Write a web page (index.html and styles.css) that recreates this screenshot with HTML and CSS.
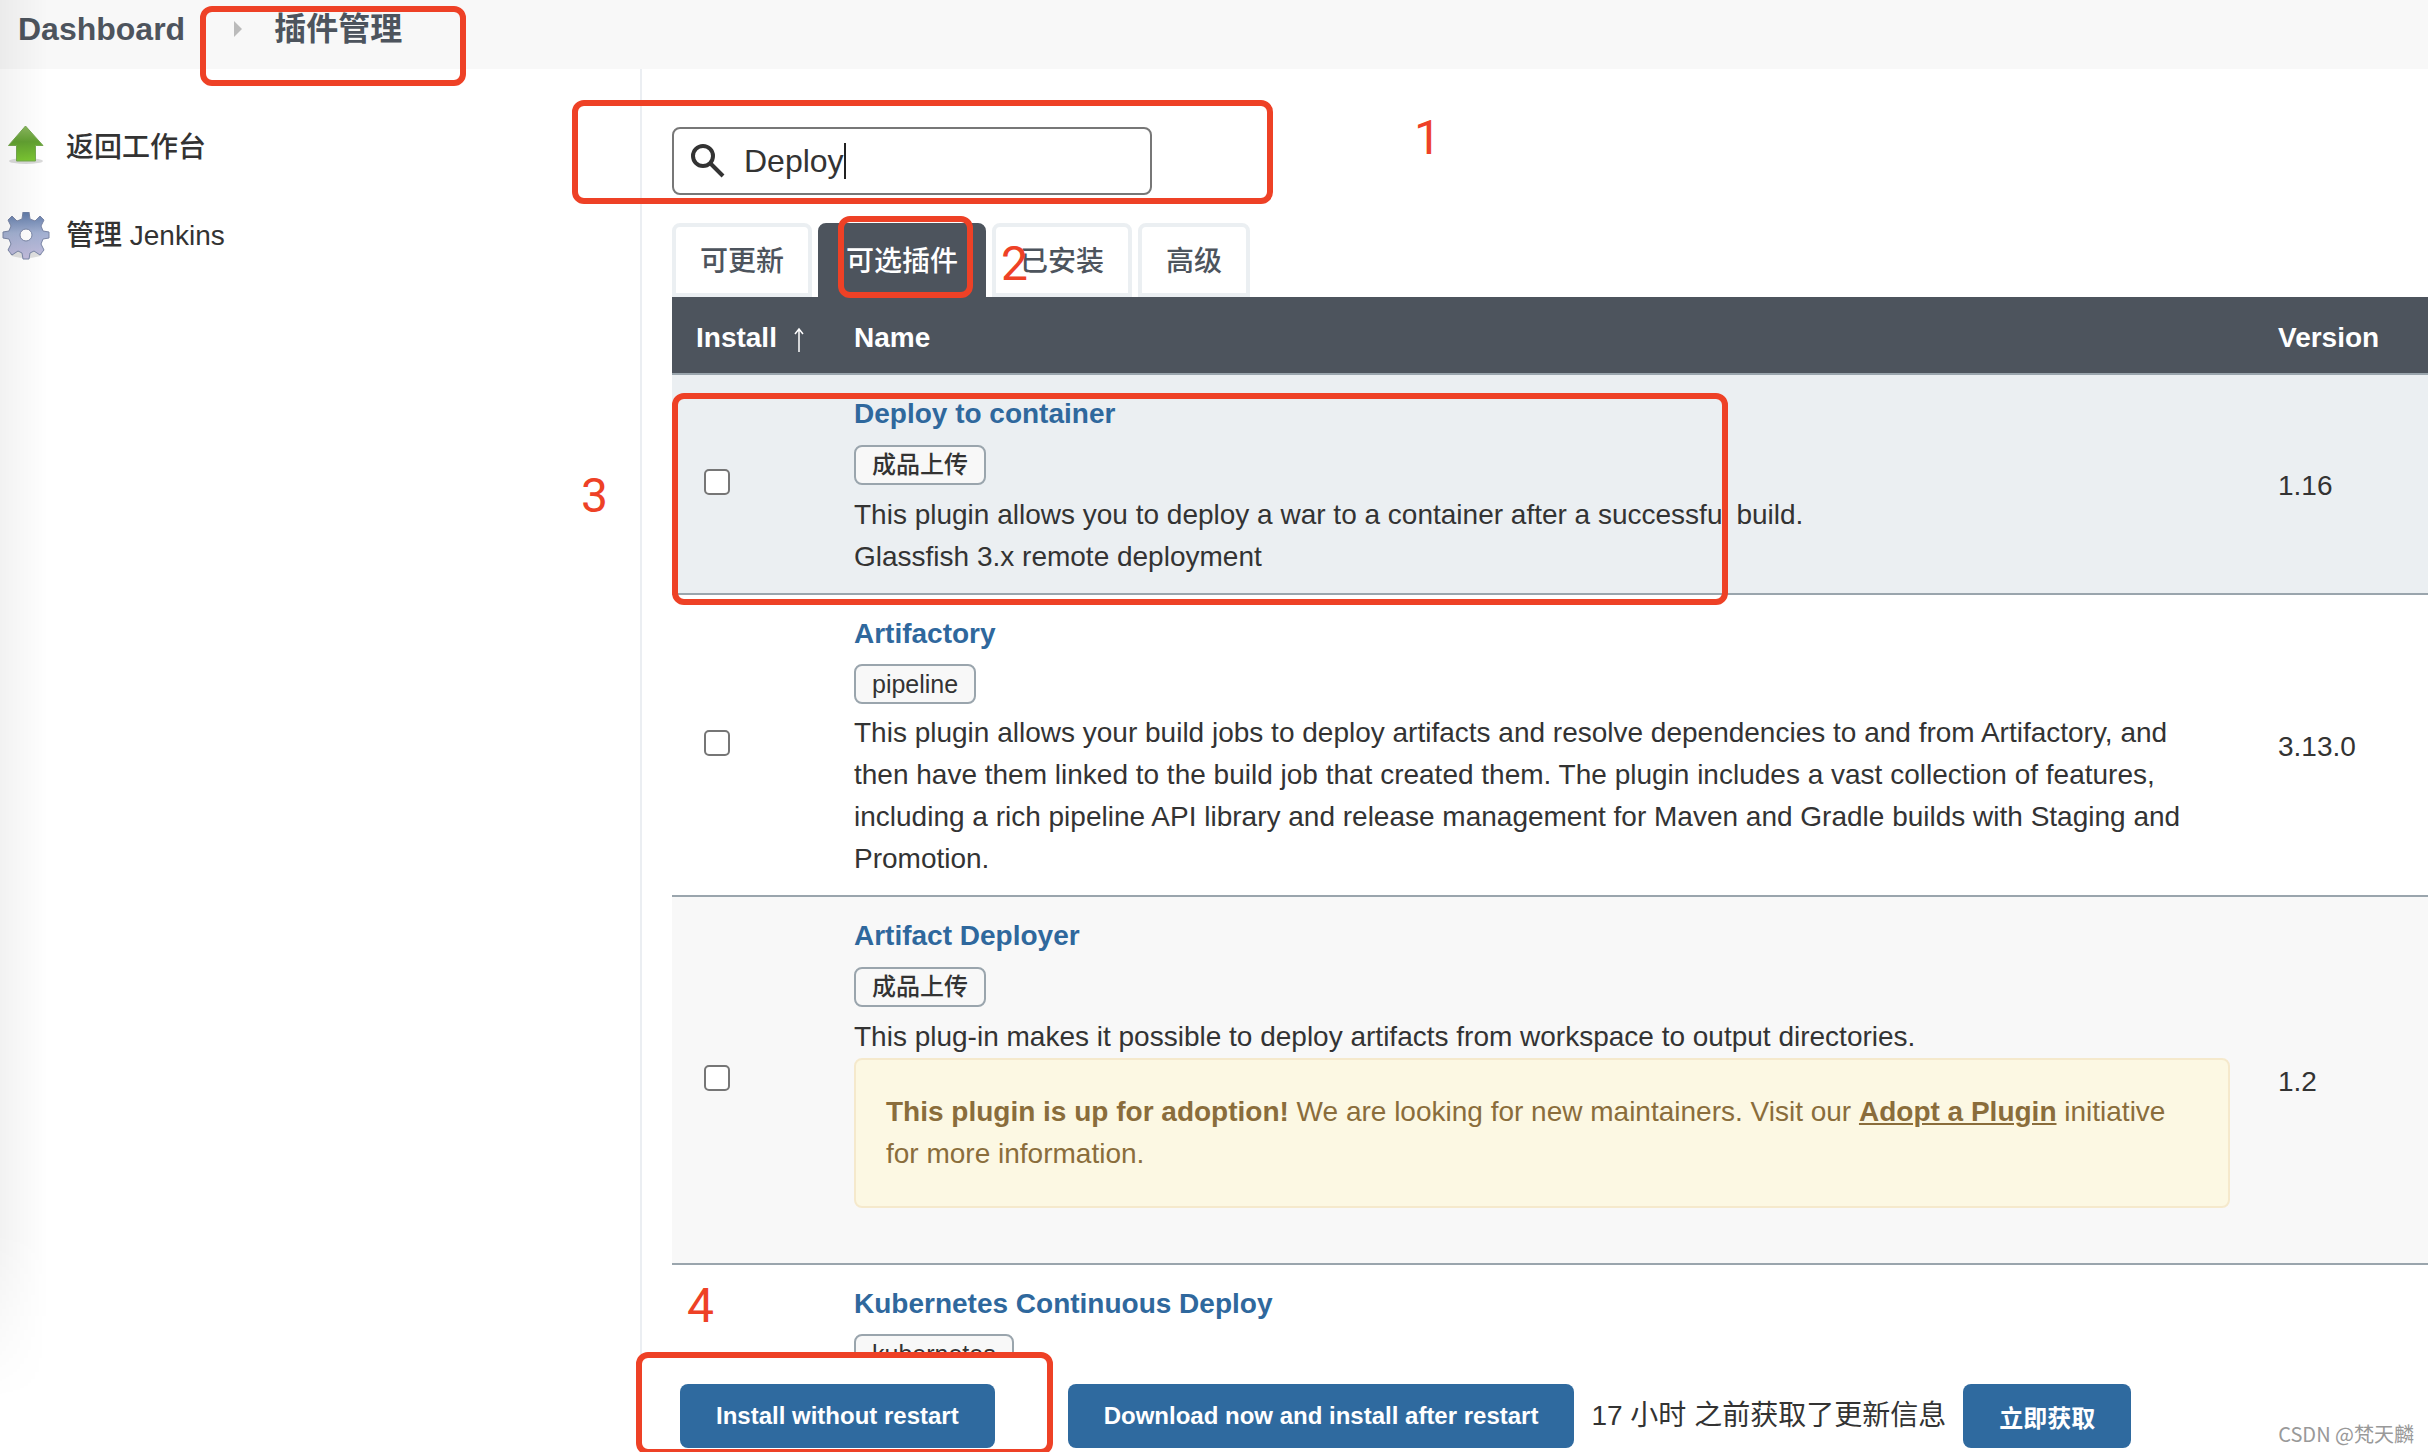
FILE: index.html
```html
<!DOCTYPE html>
<html lang="zh-CN">
<head>
<meta charset="utf-8">
<title>插件管理 [Jenkins]</title>
<link rel="stylesheet" href="styles.css">
</head>
<body>
<div class="page">
  <nav class="breadcrumbs">
    <a href="#" class="crumb">Dashboard</a>
    <span class="crumb-arrow"></span>
    <a href="#" class="crumb">插件管理</a>
  </nav>

  <div class="layout">
    <aside class="side">
      <a href="#" class="task">
        <svg class="task-icon" viewBox="0 0 48 48" aria-hidden="true">
          <defs>
            <linearGradient id="leaf" x1="0" y1="0" x2="0" y2="1"><stop offset="0" stop-color="#8cb860"/><stop offset=".45" stop-color="#62a032"/><stop offset="1" stop-color="#7cc832"/></linearGradient>
          </defs>
          <ellipse cx="24" cy="37" rx="17" ry="3" fill="#000" opacity=".14"/>
          <path d="M23.500 2 41 21.500H33.500V37H14.500V21.500H6.500Z" fill="url(#leaf)" stroke="#76a850" stroke-width="1"/>
        </svg>
        <span>返回工作台</span>
      </a>
      <a href="#" class="task">
        <svg class="task-icon" viewBox="0 1 48 48" aria-hidden="true">
          <defs>
            <linearGradient id="steel" x1="0" y1="0" x2="0" y2="1"><stop offset="0" stop-color="#5f7aa8"/><stop offset=".45" stop-color="#a3b1d2"/><stop offset="1" stop-color="#c4bddd"/></linearGradient>
          </defs>
          <ellipse cx="24" cy="43" rx="16" ry="4" fill="#000" opacity=".12"/>
          <path fill="url(#steel)" stroke="#7a86a6" stroke-width="1" fill-rule="evenodd" d="M21 1h6l1 7 5 2 5-5 4 4-3 6 2 5 6 1v6l-6 1-2 5 3 6-4 5-6-4-4 2-1 6h-6l-1-6-4-2-6 4-4-5 3-6-2-5-6-1v-6l6-1 2-5-3-6 4-4 5 5 5-2zM24 18a6 6 0 1 0 0 12 6 6 0 0 0 0-12z"/>
        </svg>
        <span>管理 Jenkins</span>
      </a>
    </aside>

    <main class="main">
      <div class="search">
        <svg class="search-icon" viewBox="0 0 36 36" aria-hidden="true"><circle cx="13" cy="13" r="10" fill="none" stroke="#333" stroke-width="4"/><path d="M20 20 33 33" stroke="#333" stroke-width="4"/></svg>
        <input class="search-input" type="text" value="Deploy" aria-label="搜索">
        <span class="caret"></span>
      </div>

      <div class="tabs">
        <a href="#" class="tab">可更新</a>
        <a href="#" class="tab tab-active">可选插件</a>
        <a href="#" class="tab">已安装</a>
        <a href="#" class="tab">高级</a>
      </div>

      <table class="plugins">
        <thead>
          <tr><th class="col-install">Install <svg class="sort" viewBox="0 0 12 26" aria-hidden="true"><path d="M6 25V2M2 7 6 2l4 5" fill="none" stroke="#fff" stroke-width="1.500"/></svg></th><th>Name</th><th class="col-version">Version</th></tr>
        </thead>
        <tbody>
          <tr class="hovered">
            <td><input type="checkbox" class="check" aria-label="Deploy to container"></td>
            <td>
              <a href="#" class="name">Deploy to container</a>
              <div class="tags"><button class="tag">成品上传</button></div>
              <div class="about">This plugin allows you to deploy a war to a container after a successful build.<br>Glassfish 3.x remote deployment</div>
            </td>
            <td>1.16</td>
          </tr>
          <tr>
            <td><input type="checkbox" class="check" aria-label="Artifactory"></td>
            <td>
              <a href="#" class="name">Artifactory</a>
              <div class="tags"><button class="tag" lang="en">pipeline</button></div>
              <div class="about">This plugin allows your build jobs to deploy artifacts and resolve dependencies to and from Artifactory, and then have them linked to the build job that created them. The plugin includes a vast collection of features, including a rich pipeline API library and release management for Maven and Gradle builds with Staging and Promotion.</div>
            </td>
            <td>3.13.0</td>
          </tr>
          <tr class="striped">
            <td><input type="checkbox" class="check" aria-label="Artifact Deployer"></td>
            <td>
              <a href="#" class="name">Artifact Deployer</a>
              <div class="tags"><button class="tag">成品上传</button></div>
              <div class="about">This plug-in makes it possible to deploy artifacts from workspace to output directories.</div>
              <div class="warning"><strong>This plugin is up for adoption!</strong> We are looking for new maintainers. Visit our <a href="#">Adopt a Plugin</a> initiative for more information.</div>
            </td>
            <td>1.2</td>
          </tr>
          <tr>
            <td></td>
            <td>
              <a href="#" class="name">Kubernetes Continuous Deploy</a>
              <div class="tags"><button class="tag" lang="en">kubernetes</button></div>
            </td>
            <td></td>
          </tr>
        </tbody>
      </table>
    </main>
  </div>

  <footer class="actions">
    <button class="btn btn-first">Install without restart</button>
    <button class="btn">Download now and install after restart</button>
    <span class="updated">17 小时 之前获取了更新信息</span>
    <button class="btn">立即获取</button>
  </footer>

  <div class="edge-shade"></div>

  <div class="mark mark-crumb"></div>
  <div class="mark mark-search"></div>
  <div class="mark mark-tab"></div>
  <div class="mark mark-plugin"></div>
  <div class="mark mark-install"></div>
  <span class="step step-1">1</span>
  <span class="step step-2">2</span>
  <span class="step step-3">3</span>
  <span class="step step-4">4</span>
  <span class="watermark">CSDN @梵天麟</span>
</div>
</body>
</html>
```
FILE: styles.css
```css
* { box-sizing: border-box; }

body {
  margin: 0;
  background: #fff;
  color: #333;
  font: 28px/42px "Liberation Sans", "Noto Sans CJK SC", sans-serif;
}

a { color: inherit; text-decoration: none; }
button, input { font-family: inherit; color: inherit; margin: 0; }

.page {
  position: relative;
  height: 100vh;
  overflow: hidden;
  display: flex;
  flex-direction: column;
}

.breadcrumbs {
  flex: none;
  display: flex;
  align-items: center;
  height: 69px;
  padding: 0 18px 11px;
  background: #f8f8f8;
  color: #4d545d;
  font-size: 32px;
  font-weight: 600;
}
.crumb-arrow {
  margin: 0 32px 0 49px;
  border: 8px solid transparent;
  border-left-color: #bbb;
  border-right-width: 0;
}

.layout { flex: 1; min-height: 0; display: flex; }

.side {
  flex: none;
  width: 642px;
  border-right: 2px solid #ebeef2;
  padding-top: 55px;
  font-weight: 500;
}
.task { display: flex; align-items: center; gap: 16px; height: 48px; margin-bottom: 40px; padding-left: 2px; }
.task-icon { width: 48px; height: 48px; }

.main { flex: 1; min-width: 0; padding: 58px 0 0 30px; }

.search { position: relative; display: flex; width: 480px; height: 68px; }
.search-icon { position: absolute; left: 18px; top: 16px; width: 36px; height: 36px; }
.search-input {
  width: 100%;
  padding: 0 16px 0 70px;
  border: 2px solid #777;
  border-radius: 8px;
  background: #fff;
  font-size: 32px;
}
.caret { position: absolute; left: 172px; top: 16px; width: 2px; height: 36px; background: #222; }

.tabs { display: flex; gap: 6px; margin-top: 28px; }
.tab {
  height: 74px;
  padding: 14px 24px 0;
  border: 4px solid #ebeff2;
  border-radius: 8px 8px 0 0;
  color: #4d545d;
  font-weight: 500;
}
.tab-active { background: #4d545d; border-color: #4d545d; color: #fff; }

.plugins { width: 100%; border-collapse: separate; border-spacing: 0; table-layout: fixed; }
.plugins th {
  height: 78px;
  padding: 5px 24px 0;
  border-bottom: 2px solid #9aa5ad;
  background: #4d545d;
  color: #fff;
  text-align: left;
  font-weight: 700;
}
.plugins td { padding: 18px 24px 15px; border-bottom: 2px solid #9aa5ad; vertical-align: middle; }
.plugins .col-install { width: 158px; white-space: nowrap; }
.plugins .col-version { width: 174px; }
.sort { width: 12px; height: 26px; margin-left: 8px; vertical-align: -6px; }
.hovered { background: #ebeff2; }
.striped { background: #f8f8f8; }

.check {
  appearance: none;
  display: block;
  width: 26px;
  height: 26px;
  margin: 0 0 8px 8px;
  border: 2px solid #767676;
  border-radius: 5px;
  background: #fff;
}

.name { display: block; color: #2f689d; font-weight: 700; }
.tags { display: flex; margin: 9px 0 8px; }
.tag {
  height: 40px;
  margin: 1px 0;
  padding: 0 16px;
  border: 2px solid #9aa5ad;
  border-radius: 8px;
  background: #f8f8f8;
  font-size: 24px;
  font-weight: 500;
  line-height: 36px;
}
.tag:lang(en) { margin: 0; font-size: 25px; }
.about { max-width: 1350px; }

.warning {
  margin-bottom: 40px;
  padding: 31px 30px;
  border: 2px solid #f5e9cc;
  border-radius: 8px;
  background: #fcf8e3;
  color: #8a6d3b;
}
.warning a { font-weight: 700; text-decoration: underline; }

.actions {
  position: absolute;
  left: 642px;
  right: 0;
  bottom: 0;
  display: flex;
  align-items: center;
  gap: 17px;
  height: 98px;
  padding: 28px 38px 2px;
  background: #fff;
}
.btn {
  height: 64px;
  padding: 0 36px;
  border: 0;
  border-radius: 8px;
  background: #2f6a9f;
  color: #fff;
  font-size: 24px;
  font-weight: 700;
}
.btn-first { margin-right: 56px; }

.edge-shade {
  position: absolute;
  left: 0;
  top: 0;
  width: 48px;
  height: 1400px;
  background: linear-gradient(90deg, rgba(0, 0, 0, .05), transparent);
  mask-image: linear-gradient(#000 88%, transparent);
}

/* Hand-drawn callouts over the page */
.mark { position: absolute; border: 6px solid #ee4126; border-radius: 12px; }
.mark-crumb { left: 200px; top: 6px; width: 266px; height: 80px; }
.mark-search { left: 572px; top: 100px; width: 701px; height: 104px; }
.mark-tab { left: 838px; top: 216px; width: 135px; height: 82px; }
.mark-plugin { left: 672px; top: 393px; width: 1056px; height: 212px; }
.mark-install { left: 636px; top: 1352px; width: 417px; height: 103px; }

.step { position: absolute; color: #ee4126; font: 48px/48px Roboto, sans-serif; }
.step-1 { left: 1414px; top: 114px; }
.step-2 { left: 1001px; top: 240px; }
.step-3 { left: 581px; top: 472px; }
.step-4 { left: 687px; top: 1282px; }

.watermark {
  position: absolute;
  right: 14px;
  bottom: 4px;
  color: #999;
  font: 20px/28px "Noto Sans CJK SC", sans-serif;
}
```
